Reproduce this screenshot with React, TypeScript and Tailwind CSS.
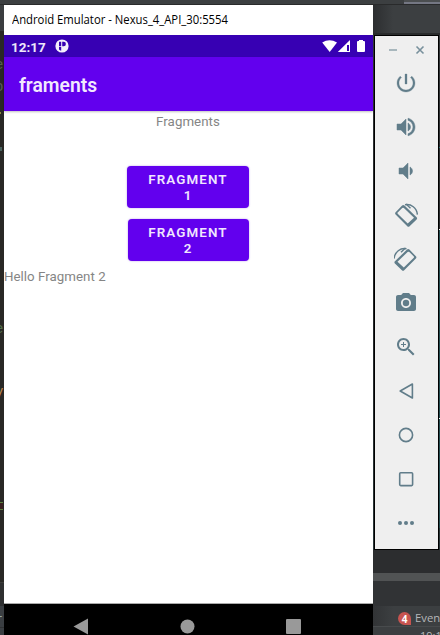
import React from "react";

const Icon = ({ children }: { children: React.ReactNode }) => (
  <svg viewBox="0 0 24 24" className="h-6 w-6 shrink-0 text-[#617d8a]" fill="currentColor">
    {children}
  </svg>
);

const rotateDrawing = (
  <>
    <path
      fillRule="evenodd"
      d="M8.1 2.5Q9.3 1.5 10.5 2.5L22.6 14.3Q23.6 15.4 22.6 16.5L15.6 23.2Q14.4 24.2 13.3 23.2L1.6 11.5Q.6 10.4 1.6 9.3ZM8.2 5L3.7 9.4Q3.2 10.1 3.7 10.7L13.7 20.4L20 14.8L9.9 5Q9.1 4.3 8.2 5Z"
    />
    <path d="M11 1.7C17 .5 22.9 5 23.4 11.6" fill="none" stroke="currentColor" strokeWidth="1.4" />
    <path d="M12 1L16.5 5.3" fill="none" stroke="currentColor" strokeWidth="1.4" />
  </>
);

function Toolbar() {
  return (
    <aside className="ml-px h-[515px] w-[65px] border border-black bg-[#efefef]">
      <div className="flex h-[34px] pl-[13px] pt-[9px] text-[#78909c]">
        <svg viewBox="0 0 10 10" className="h-2.5 w-2.5" stroke="#a0b0b7" strokeWidth="1.8">
          <path d="M1 5H9" />
        </svg>
        <svg viewBox="0 0 10 10" className="ml-[17px] h-2.5 w-2.5" stroke="currentColor" strokeWidth="1.6">
          <path d="M1.5 1.5L8.5 8.5M8.5 1.5L1.5 8.5" />
        </svg>
      </div>
      <div className="flex flex-col gap-5 pl-[19px] pt-px">
        <Icon><path d="M13 3h-2v10h2V3zm4.83 2.17l-1.42 1.42C17.99 7.86 19 9.81 19 12c0 3.87-3.13 7-7 7s-7-3.13-7-7c0-2.19 1.01-4.14 2.58-5.42L6.17 5.17C4.23 6.82 3 9.26 3 12c0 4.97 4.03 9 9 9s9-4.03 9-9c0-2.74-1.23-5.18-3.17-6.83z" stroke="currentColor" strokeWidth="0.3" /></Icon>
        <Icon><path d="M3 9v6h4l5 5V4L7 9H3zm13.5 3c0-1.77-1.02-3.29-2.5-4.03v8.05c1.48-.73 2.5-2.25 2.5-4.02zM14 3.23v2.06c2.89.86 5 3.54 5 6.71s-2.11 5.85-5 6.71v2.06c4.01-.91 7-4.49 7-8.77s-2.99-7.86-7-8.77z" stroke="currentColor" strokeWidth="0.5" /></Icon>
        <Icon><path d="M18.5 12c0-1.77-1.02-3.29-2.5-4.03v8.05c1.48-.73 2.5-2.25 2.5-4.02zM5 9v6h4l5 5V4L9 9H5z" stroke="currentColor" strokeWidth="0.5" /></Icon>
        <Icon>{rotateDrawing}</Icon>
        <Icon><g transform="translate(23.5 0) scale(-1 1)">{rotateDrawing}</g></Icon>
        <Icon>
          <circle cx="12" cy="12" r="3.2" />
          <path d="M9 2L7.17 4H4c-1.1 0-2 .9-2 2v12c0 1.1.9 2 2 2h16c1.1 0 2-.9 2-2V6c0-1.1-.9-2-2-2h-3.17L15 2H9zm3 15c-2.76 0-5-2.24-5-5s2.24-5 5-5 5 2.24 5 5-2.24 5-5 5z" />
        </Icon>
        <Icon><path d="M15.5 14h-.79l-.28-.27C15.41 12.59 16 11.11 16 9.5 16 5.91 13.09 3 9.5 3S3 5.91 3 9.5 5.91 16 9.5 16c1.61 0 3.09-.59 4.23-1.57l.27.28v.79l5 4.99L20.49 19l-4.99-5zm-6 0C7.01 14 5 11.99 5 9.5S7.01 5 9.5 5 14 7.01 14 9.5 11.99 14 9.5 14zM9 7h1v2h2v1h-2v2H9v-2H7V9h2z" /></Icon>
        <Icon><path d="M18.4 5L6.2 12L18.4 19Z" fill="none" stroke="currentColor" strokeWidth="1.6" strokeLinejoin="round" /></Icon>
        <Icon><circle cx="12" cy="12" r="6.6" fill="none" stroke="currentColor" strokeWidth="1.6" /></Icon>
        <Icon><rect x="5.7" y="5.7" width="12.9" height="12.9" rx="1" fill="none" stroke="currentColor" strokeWidth="1.6" /></Icon>
        <Icon><circle cx="6" cy="12" r="2" /><circle cx="12" cy="12" r="2" /><circle cx="18" cy="12" r="2" /></Icon>
      </div>
    </aside>
  );
}

function Phone() {
  return (
    <main className="flex h-[630px] w-[369px] shrink-0 flex-col bg-white font-[Roboto,sans-serif]">
      <div className="flex h-[30px] shrink-0 items-center whitespace-nowrap pl-2 text-black">
        <svg className="h-[30px] w-[230px]">
          <text x="0" y="19" textLength="216" lengthAdjust="spacingAndGlyphs" fontFamily="'Open Sans', sans-serif" fontSize="12">Android Emulator - Nexus_4_API_30:5554</text>
        </svg>
      </div>
      <div className="flex h-[22px] shrink-0 items-center bg-[#3700b3] text-[#eee8fa]">
        <span className="ml-[7px] w-[45px] pt-px text-[13.5px] font-bold leading-[22px]">12:17</span>
        <svg viewBox="0 0 14 14" className="-ml-px h-3.5 w-3.5">
          <circle cx="7" cy="7" r="6.6" fill="#f4effc" />
          <path d="M4 2.8H6.2V7.2H4ZM7.2 2.8H8.7A2.2 2.2 0 0 1 8.7 7.2H7.2ZM4 8H6.2V11.7Q4.8 11.3 4 10.6Z" fill="#3700b3" />
        </svg>
        <svg viewBox="0 0 44 14" className="ml-auto mr-[7px] h-3.5 w-11" fill="#fff">
          <path d="M0.2 3.5Q7.5-1.2 15 3.5L7.7 13Z" />
          <path fillRule="evenodd" d="M28 1V13H15.8ZM25 6V12H27V6Z" />
          <path d="M37 1H41V2H42Q43 2 43 3V12Q43 13 42 13H36Q35 13 35 12V3Q35 2 36 2H37Z" />
        </svg>
      </div>
      <header className="z-10 flex h-[54px] shrink-0 items-center bg-[#6200ee] pl-[15px] shadow-[0_1px_2px_rgba(0,0,0,0.25)]">
        <h1 className="pt-[5px] text-[19.3px] font-semibold text-[#f2e9fe]">framents</h1>
      </header>
      <section className="flex grow flex-col items-center text-[13.3px] leading-4 text-[#858585]">
        <p className="mr-px mt-[3px] h-[52px] tracking-[0.05px]">Fragments</p>
        <button className="mr-px h-[42px] w-[122px] rounded-[4px] bg-[#6200ee] pt-px text-[13.4px] font-semibold leading-[15.5px] tracking-[1.1px] text-[#f0e6fe] shadow-[0_0_2px_rgba(80,0,200,0.4)]">FRAGMENT<br />1</button>
        <button className="mr-px mt-[11px] h-[42px] w-[121px] rounded-[4px] bg-[#6200ee] pt-px text-[13.4px] font-semibold leading-[15.5px] tracking-[1.1px] text-[#f0e6fe] shadow-[0_0_2px_rgba(80,0,200,0.4)]">FRAGMENT<br />2</button>
        <p className="mt-2 self-start tracking-[0.03px]">Hello Fragment 2</p>
      </section>
      <nav className="flex h-8 shrink-0 justify-center border-t border-[#aaa] bg-black">
        <svg viewBox="0 0 240 31" className="mr-0.5 h-[31px] w-60" fill="#999">
          <path d="M20 14.5V30.5L5.5 22.5Z" />
          <circle cx="119.5" cy="22.5" r="7" />
          <rect x="218" y="15" width="15" height="15" rx="1" />
        </svg>
      </nav>
    </main>
  );
}

function EditorEdge() {
  return (
    <div className="flex w-1 shrink-0 flex-col overflow-hidden bg-[#292825]">
      <div className="h-[26px] shrink-0 bg-[#3a3d3f]" />
      <div className="relative h-[551px] shrink-0 font-['Liberation_Mono',monospace] text-[14px] leading-4">
        <span className="absolute -left-[5px] top-[26px] text-[#55624a]">e</span>
        <span className="absolute -left-[5px] top-[48px] text-[#5b5b58]">o</span>
        <span className="absolute left-0 top-[81px] h-0.5 w-px bg-[#8a8a37]" />
        <span className="absolute left-0 top-[116px] h-1 w-0.5 bg-[#4b625d]" />
        <span className="absolute -left-[5px] top-[290px] text-[#55704a]">e</span>
        <span className="absolute -left-[5px] top-[353px] text-[#c08a50]">y</span>
        <span className="absolute left-0 top-[471px] h-2 w-[3px] border-y border-[#5c803e] bg-[#3a2020]" />
        <span className="absolute left-0 top-[551px] h-px w-1 bg-[#3c3c3a]" />
      </div>
      <div className="h-6 shrink-0 bg-[#2e2f30]" />
      <div className="relative grow bg-[#3a3e42]">
        <span className="absolute -left-[3px] top-[5px] font-['Open_Sans',sans-serif] text-[12px] leading-4 text-[#a0b3ae]">r</span>
        <span className="absolute left-0 top-[21px] h-px w-1 bg-[#2e3032]" />
      </div>
    </div>
  );
}

export default function App() {
  return (
    <div className="flex h-[635px] w-[440px] flex-col overflow-hidden bg-[#3c3f41]">
      <div className="flex h-[5px] shrink-0 justify-end border-b border-[#292a2b]">
        <div className="h-full w-9 border-b-2 border-[#747783] bg-[#4b4e50]" />
      </div>
      <div className="flex grow">
        <EditorEdge />
        <Phone />
        <div className="flex w-[67px] shrink-0 flex-col">
          <div className="h-[30px] shrink-0 border-b-2 border-[#292b2c] bg-gradient-to-r from-[#2c2e30] to-[#3c3f41] to-30%" />
          <div className="flex bg-gradient-to-b from-[#333638] via-[#242729] to-[#293638]">
            <Toolbar />
            <div className="flex w-px flex-col">
              <div className="mt-28 h-px bg-[#2a7477]" />
              <div className="mt-[81px] h-px bg-white" />
              <div className="h-[188px] bg-[#254d50]" />
              <div className="h-px bg-white" />
              <div className="h-[109px] bg-[#254d50]" />
            </div>
          </div>
          <div className="h-[23px] shrink-0 bg-[#2c2d2f]" />
          <div className="h-2 shrink-0 bg-[#515354]" />
          <div className="h-[25px] shrink-0 bg-[#313335]" />
          <div className="flex h-[21px] shrink-0 items-center border-b border-[#484b4d] bg-gradient-to-r from-[#323436] to-[#3c3f41] to-30% pl-[25px] pt-[5px] font-['Open_Sans',sans-serif] text-[11.3px] text-[#b5b7b9]">
            <span className="mr-1 flex h-[13px] w-[13px] shrink-0 items-center justify-center rounded-full rounded-br-none bg-[#c75450] text-[10px] font-bold leading-none text-white">4</span>
            <span className="whitespace-nowrap">Event Log</span>
          </div>
          <div className="h-2 overflow-hidden pl-[47px] pt-[3px] font-['Open_Sans',sans-serif] text-[11px] leading-[12px] text-[#b5b7b9]">19:17</div>
        </div>
      </div>
    </div>
  );
}
